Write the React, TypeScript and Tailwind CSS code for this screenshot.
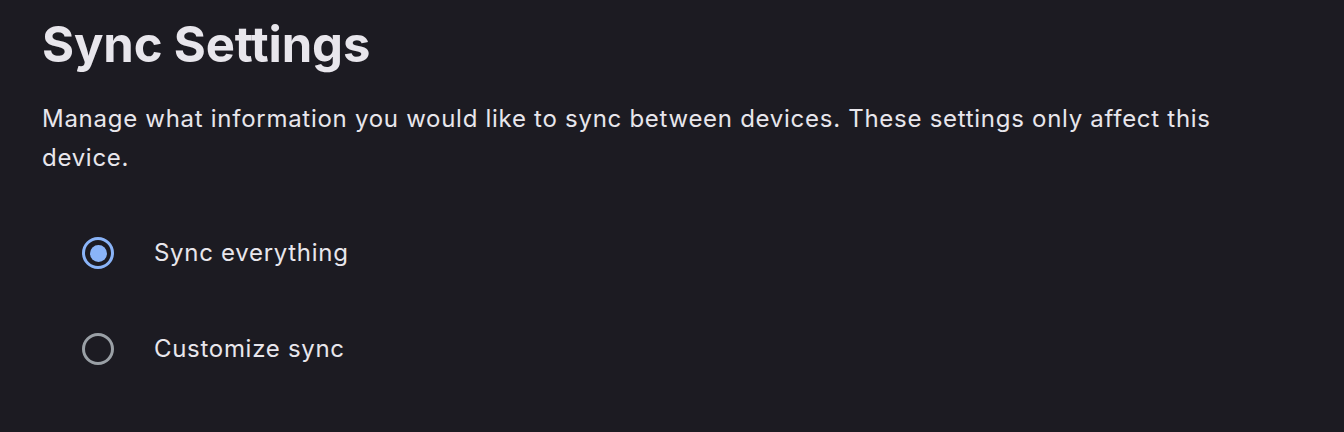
import React, { useState } from 'react';

function Radio({ checked }: { checked: boolean }) {
  return (
    <span
      className={
        'flex h-[32px] w-[32px] items-center justify-center rounded-full border-[3px] ' +
        (checked ? 'border-[#8ab4f8]' : 'border-[#9aa0a6]')
      }
    >
      {checked && <span className="h-[17px] w-[17px] rounded-full bg-[#8ab4f8]" />}
    </span>
  );
}

export default function App() {
  const [mode, setMode] = useState('all');

  const options = [
    { id: 'all', label: 'Sync everything' },
    { id: 'custom', label: 'Customize sync' },
  ];

  return (
    <div className="min-h-screen bg-[#1c1b22] px-[42px] pt-[12px] font-['Inter',sans-serif] text-[#e8e6ec]">
      <h1 className="text-[49px] font-bold leading-[66px] tracking-[-0.15px]">Sync Settings</h1>
      <p className="mt-[21px] max-w-[1200px] text-[24px] leading-[39px] tracking-[0.72px]">
        Manage what information you would like to sync between devices. These settings only affect this device.
      </p>
      <div className="mt-[44px] flex flex-col gap-[32px] pl-[40px]">
        {options.map(o => (
          <label
            key={o.id}
            className="flex h-[64px] cursor-pointer items-center gap-[40px] text-[24px] tracking-[0.7px]"
            onClick={() => setMode(o.id)}
          >
            <Radio checked={mode === o.id} />
            <span>{o.label}</span>
          </label>
        ))}
      </div>
    </div>
  );
}
